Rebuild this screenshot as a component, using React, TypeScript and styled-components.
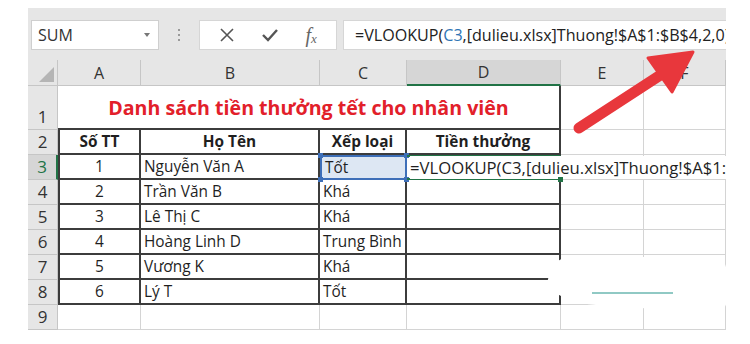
import styled, { createGlobalStyle, css } from "styled-components";

const GlobalStyle = createGlobalStyle`
  body {
    margin: 0;
    background: #fff;
    font-family: "Open Sans", "Liberation Sans", sans-serif;
  }
`;

const GRID = "#d4d4d4";
const DARK = "#3c3c3c";
const GREEN = "#217346";
const BLUE = "#3e6fb8";

const Frame = styled.div`
  position: relative;
  margin: 8px 0 0 28px;
  width: 698px;
  overflow: hidden;
`;

const Toolbar = styled.div`
  height: 52px;
  background: #e6e6e6;
  display: flex;
  align-items: flex-start;
  padding: 12px 0 0 3px;
  box-sizing: border-box;
`;

const NameBox = styled.div`
  width: 128px;
  height: 30px;
  background: #fff;
  border: 1px solid #cfcfcf;
  box-sizing: border-box;
  display: flex;
  align-items: center;
  justify-content: space-between;
  padding: 0 8px 0 6px;
  font-size: 16px;
  color: #333;
`;

const Caret = styled.span`
  width: 0;
  height: 0;
  border-left: 3px solid transparent;
  border-right: 3px solid transparent;
  border-top: 4px solid #777;
`;

const Dots = styled.div`
  width: 40px;
  height: 30px;
  display: flex;
  flex-direction: column;
  align-items: center;
  justify-content: center;
  gap: 3px;
  span {
    width: 2px;
    height: 2px;
    background: #9a9a9a;
  }
`;

const FxBox = styled.div`
  width: 138px;
  height: 30px;
  background: #fff;
  border: 1px solid #d6d6d6;
  box-sizing: border-box;
  display: flex;
  align-items: center;
  justify-content: space-around;
  padding: 0 6px;
`;

const FxLabel = styled.span`
  font-family: "Liberation Serif", serif;
  font-style: italic;
  font-size: 20px;
  color: #666;
  sub {
    font-size: 13px;
    vertical-align: -1px;
  }
`;

const FormulaInput = styled.div`
  flex: 1;
  margin-left: 6px;
  height: 30px;
  background: #fff;
  border: 1px solid #d6d6d6;
  border-right: none;
  box-sizing: border-box;
  display: flex;
  align-items: center;
  padding-left: 11px;
  font-size: 16.1px;
  color: #222;
  white-space: nowrap;
  overflow: hidden;
`;

const Ref = styled.span`
  color: #2f75b5;
`;

const Sheet = styled.div`
  display: grid;
  grid-template-columns: 30px 83px 179px 87px 154px 83px 82px;
  grid-template-rows: 26px 44px repeat(8, 25px);
  background: #fff;
`;

const ColHead = styled.div<{ $active?: boolean }>`
  background: ${(p) => (p.$active ? "#d6d6d6" : "#e6e6e6")};
  border-right: 1px solid #c6c6c6;
  border-bottom: ${(p) => (p.$active ? `2px solid ${GREEN}` : "1px solid #c6c6c6")};
  box-sizing: border-box;
  display: flex;
  align-items: center;
  justify-content: center;
  font-size: 16px;
  color: #333;
`;

const Corner = styled.div`
  background: #e6e6e6;
  border-right: 1px solid #c6c6c6;
  border-bottom: 1px solid #c6c6c6;
  box-sizing: border-box;
  position: relative;
  &::after {
    content: "";
    position: absolute;
    right: 3px;
    bottom: 3px;
    border-left: 15px solid transparent;
    border-bottom: 15px solid #b5b5b5;
  }
`;

const RowHead = styled.div<{ $active?: boolean }>`
  background: ${(p) => (p.$active ? "#d6d6d6" : "#e6e6e6")};
  border-right: ${(p) => (p.$active ? `2px solid ${GREEN}` : "1px solid #c6c6c6")};
  border-bottom: 1px solid #c6c6c6;
  box-sizing: border-box;
  display: flex;
  align-items: flex-end;
  justify-content: center;
  padding-bottom: 1px;
  font-size: 17px;
  color: ${(p) => (p.$active ? GREEN : "#333")};
`;

type CellProps = {
  $align?: "left" | "center";
  $bold?: boolean;
  $table?: boolean;
  $first?: boolean;
};

const Cell = styled.div<CellProps>`
  border-right: 1px solid ${GRID};
  border-bottom: 1px solid ${GRID};
  box-sizing: border-box;
  display: flex;
  align-items: center;
  justify-content: ${(p) => (p.$align === "center" ? "center" : "flex-start")};
  padding: 0 3px;
  font-size: 15.4px;
  font-weight: ${(p) => (p.$bold ? 700 : 400)};
  color: #1f1f1f;
  white-space: nowrap;
  ${(p) =>
    p.$table &&
    css`
      border-right: 2px solid ${DARK};
      border-bottom: 2px solid ${DARK};
    `}
  ${(p) =>
    p.$first &&
    css`
      border-left: 2px solid ${DARK};
    `}
`;

const TitleCell = styled.div`
  grid-column: span 4;
  border-right: 2px solid ${DARK};
  border-bottom: 2px solid ${DARK};
  box-sizing: border-box;
  display: flex;
  align-items: center;
  justify-content: center;
  font-size: 19.6px;
  font-weight: 700;
  color: #e2202a;
`;

const RefCell = styled(Cell)`
  position: relative;
  background: #dde7f3;
  border: 2px solid ${BLUE};
`;

const Handle = styled.i<{ $x: "left" | "right"; $y: "top" | "bottom"; $color: string }>`
  position: absolute;
  width: 5px;
  height: 5px;
  background: ${(p) => p.$color};
  ${(p) => p.$x}: -4px;
  ${(p) => p.$y}: -4px;
`;

const ActiveCell = styled(Cell)`
  position: relative;
  border-top: 2px solid ${GREEN};
  border-bottom: 2px solid ${GREEN};
  overflow: visible;
  z-index: 2;
`;

const Overflow = styled.span`
  background: #fff;
  padding-right: 6px;
  font-size: 16.7px;
`;

const Arrow = styled.svg`
  position: absolute;
  left: 0;
  top: 0;
  pointer-events: none;
  z-index: 4;
`;

const Blotch = styled.svg`
  position: absolute;
  left: 512px;
  top: 242px;
  z-index: 3;
`;

const rows = [
  ["1", "Nguyễn Văn A", "Tốt"],
  ["2", "Trần Văn B", "Khá"],
  ["3", "Lê Thị C", "Khá"],
  ["4", "Hoàng Linh D", "Trung Bình"],
  ["5", "Vương K", "Khá"],
  ["6", "Lý T", "Tốt"],
];

const cols = ["A", "B", "C", "D", "E", "F"];

function CrossIcon() {
  return (
    <svg width="16" height="16" viewBox="0 0 16 16">
      <path d="M2 2 L14 14 M14 2 L2 14" stroke="#555" strokeWidth="1.6" fill="none" />
    </svg>
  );
}

function CheckIcon() {
  return (
    <svg width="18" height="16" viewBox="0 0 18 16">
      <path d="M2 8 L7 13 L16 3" stroke="#555" strokeWidth="2.4" fill="none" />
    </svg>
  );
}

export default function App() {
  return (
    <>
      <GlobalStyle />
      <Frame>
        <Toolbar>
          <NameBox>
            SUM
            <Caret />
          </NameBox>
          <Dots>
            <span />
            <span />
            <span />
          </Dots>
          <FxBox>
            <CrossIcon />
            <CheckIcon />
            <FxLabel>
              f<sub>x</sub>
            </FxLabel>
          </FxBox>
          <FormulaInput>
            =VLOOKUP(<Ref>C3</Ref>,[dulieu.xlsx]Thuong!$A$1:$B$4,2,0)
          </FormulaInput>
        </Toolbar>

        <Sheet>
          <Corner />
          {cols.map((c) => (
            <ColHead key={c} $active={c === "D"}>
              {c}
            </ColHead>
          ))}

          <RowHead>1</RowHead>
          <TitleCell>Danh sách tiền thưởng tết cho nhân viên</TitleCell>
          <Cell />
          <Cell />

          <RowHead>2</RowHead>
          <Cell $table $first $bold $align="center">
            Số TT
          </Cell>
          <Cell $table $bold $align="center">
            Họ Tên
          </Cell>
          <Cell $table $bold $align="center">
            Xếp loại
          </Cell>
          <Cell $table $bold $align="center">
            Tiền thưởng
          </Cell>
          <Cell />
          <Cell />

          {rows.map(([no, name, rank], i) => {
            const active = i === 0;
            return [
              <RowHead key={`h${i}`} $active={active}>
                {i + 3}
              </RowHead>,
              <Cell key={`a${i}`} $table $first $align="center">
                {no}
              </Cell>,
              <Cell key={`b${i}`} $table>
                {name}
              </Cell>,
              active ? (
                <RefCell key={`c${i}`}>
                  {rank}
                  <Handle $x="left" $y="top" $color={BLUE} />
                  <Handle $x="right" $y="top" $color={BLUE} />
                  <Handle $x="left" $y="bottom" $color={BLUE} />
                  <Handle $x="right" $y="bottom" $color={BLUE} />
                </RefCell>
              ) : (
                <Cell key={`c${i}`} $table>
                  {rank}
                </Cell>
              ),
              active ? (
                <ActiveCell key={`d${i}`} $table>
                  <Overflow>=VLOOKUP(C3,[dulieu.xlsx]Thuong!$A$1:$B$4,2,0)</Overflow>
                  <Handle $x="right" $y="bottom" $color={GREEN} />
                </ActiveCell>
              ) : (
                <Cell key={`d${i}`} $table />
              ),
              <Cell key={`e${i}`} />,
              <Cell key={`f${i}`} />,
            ];
          })}

          <RowHead>9</RowHead>
          {cols.map((c) => (
            <Cell key={`r9${c}`} />
          ))}
        </Sheet>

        <Blotch width="190" height="66" viewBox="0 0 190 66">
          <path
            d="M7 33 C10 20 16 9 25 8 L180 6 C188 12 189 34 187 50 C186 58 182 62 175 62 L100 58 C60 56 30 54 21 46 C14 42 8 38 7 33 Z"
            fill="#fff"
          />
          <line x1="52" y1="43" x2="133" y2="43" stroke="#6bb7b0" strokeWidth="1.5" />
        </Blotch>

        <Arrow width="698" height="336" viewBox="0 0 698 336">
          <line x1="551" y1="120" x2="634" y2="66" stroke="#e8373c" strokeWidth="11" strokeLinecap="round" />
          <polygon points="665,44 620,50 644,84" fill="#e8373c" stroke="#e8373c" strokeWidth="3" strokeLinejoin="round" />
        </Arrow>
      </Frame>
    </>
  );
}
